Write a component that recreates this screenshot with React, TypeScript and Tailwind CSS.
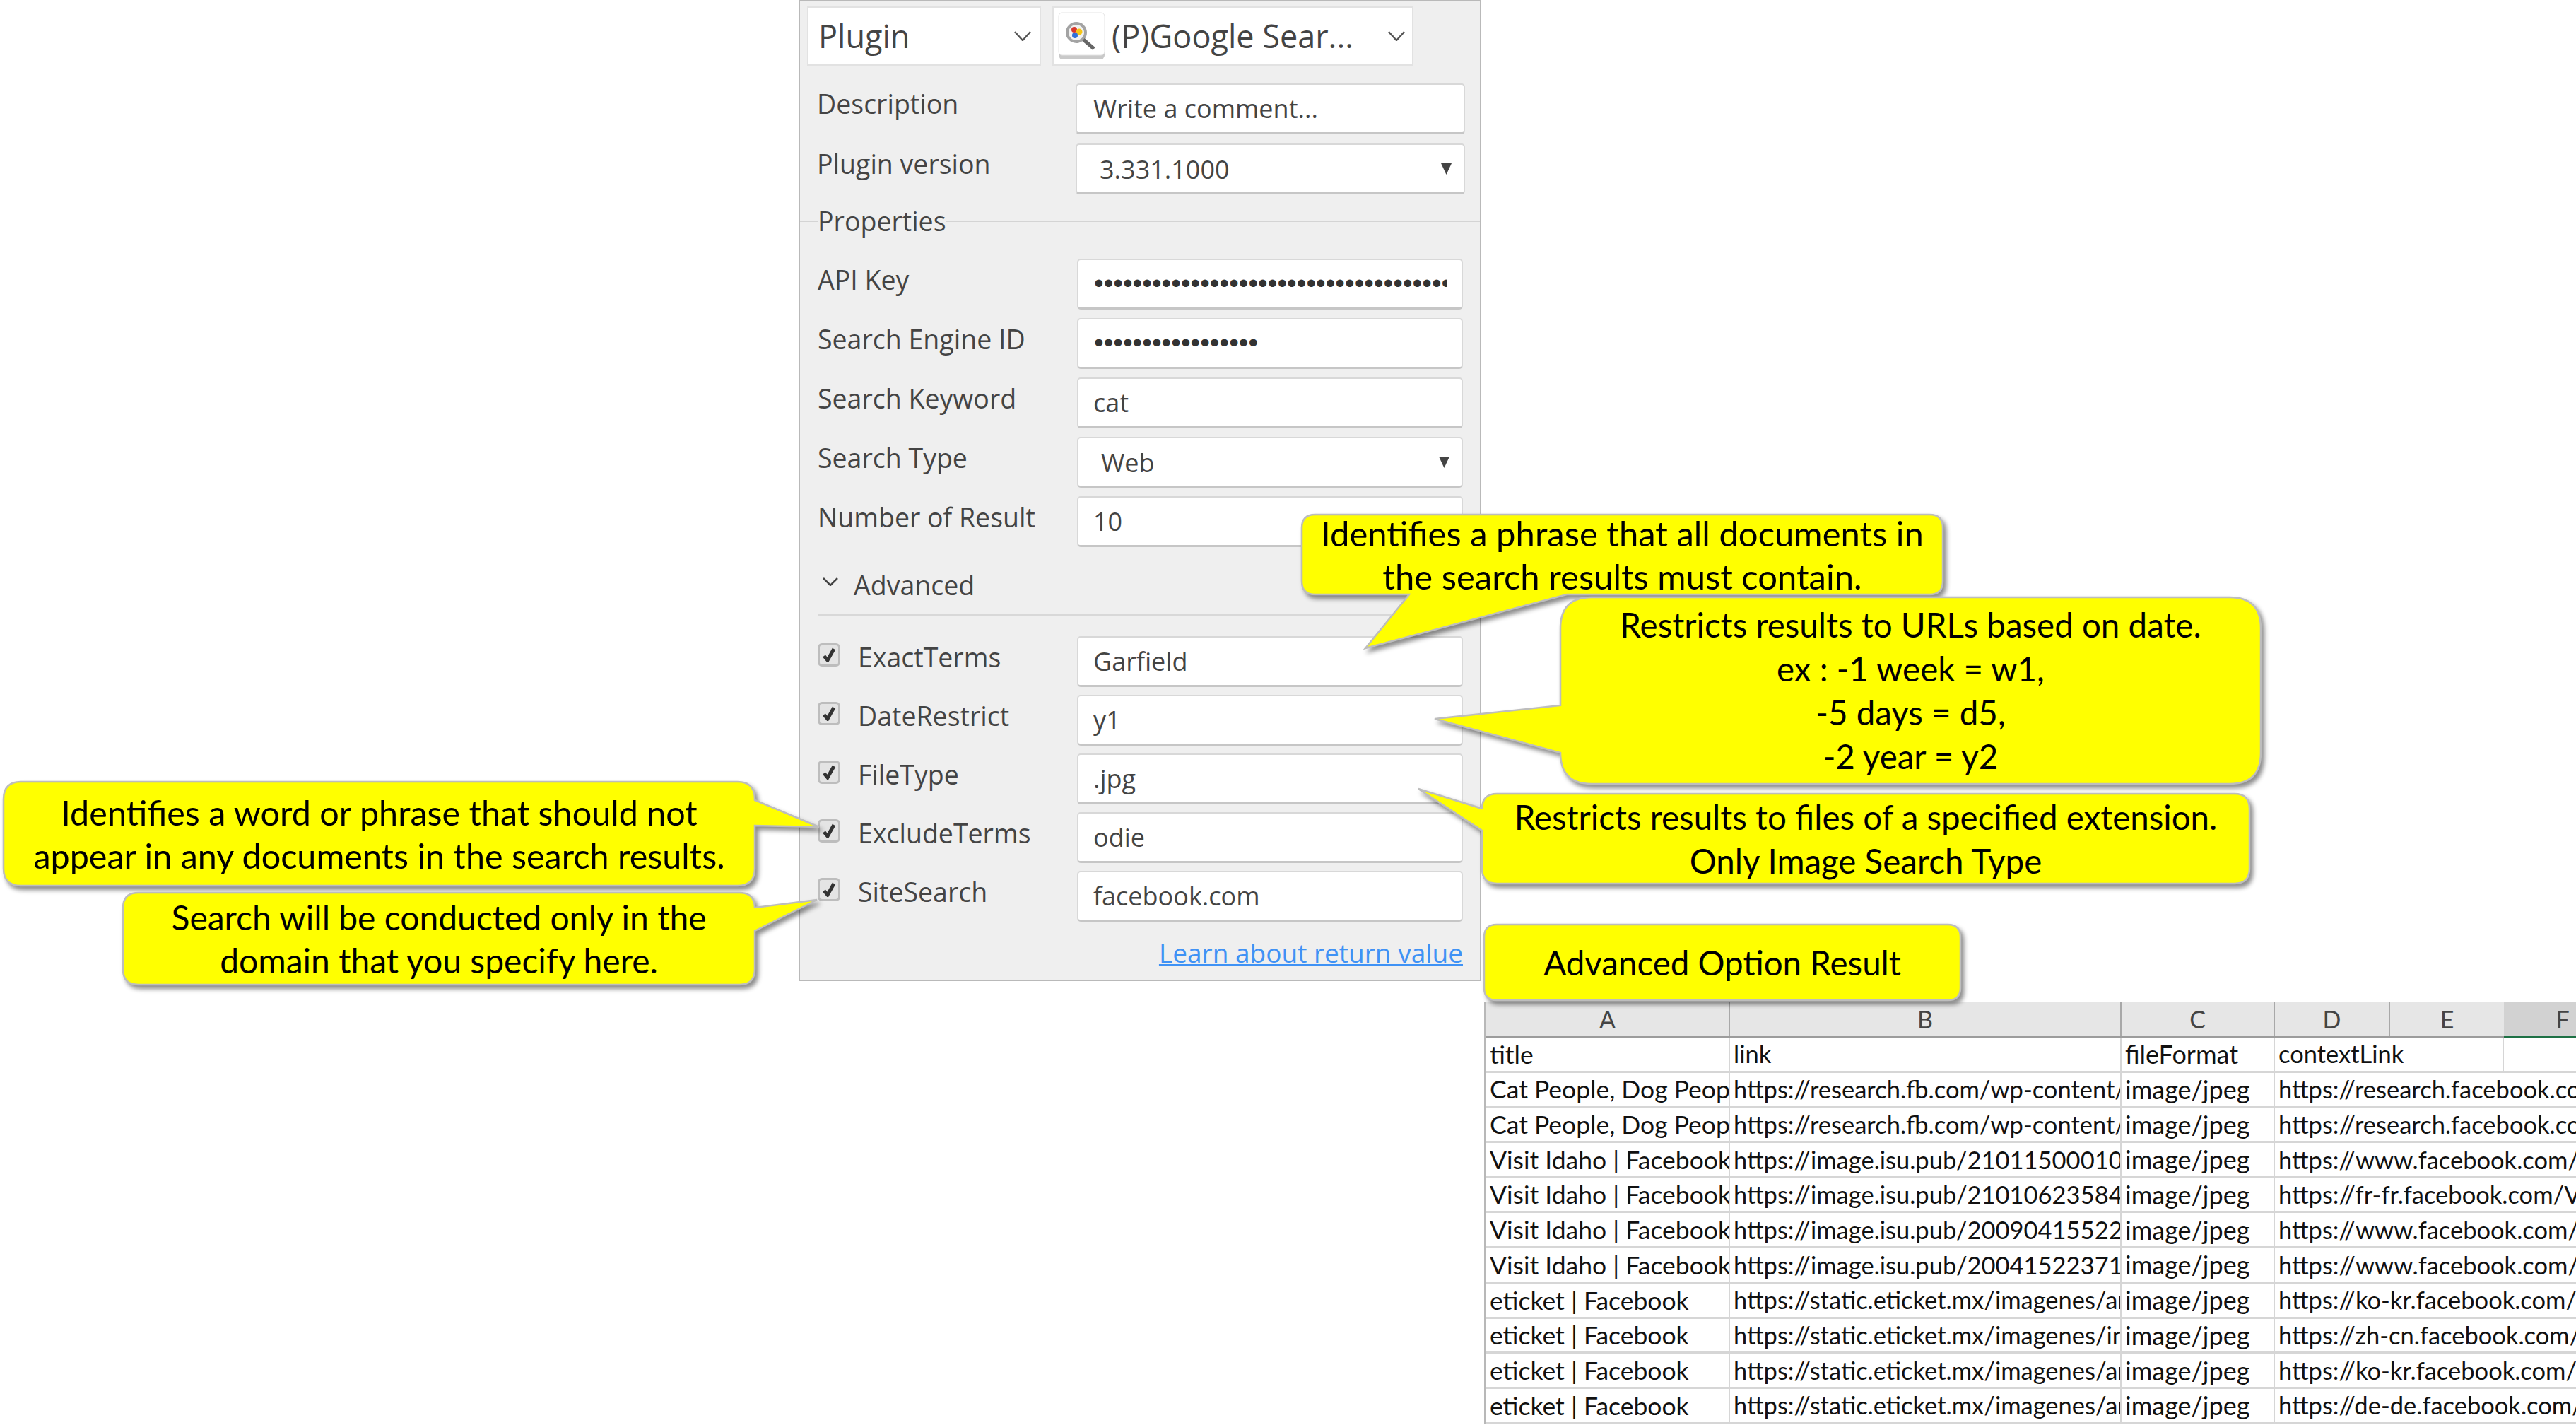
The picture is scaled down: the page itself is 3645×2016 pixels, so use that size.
const SHEET_ROWS = [
  ["Cat People, Dog Peop", "https://research.fb.com/wp-content/", "https://research.facebook.co"],
  ["Cat People, Dog Peop", "https://research.fb.com/wp-content/", "https://research.facebook.co"],
  ["Visit Idaho | Facebook", "https://image.isu.pub/210115000109", "https://www.facebook.com/"],
  ["Visit Idaho | Facebook", "https://image.isu.pub/210106235847", "https://fr-fr.facebook.com/V"],
  ["Visit Idaho | Facebook", "https://image.isu.pub/200904155223", "https://www.facebook.com/"],
  ["Visit Idaho | Facebook", "https://image.isu.pub/200415223714", "https://www.facebook.com/"],
  ["eticket | Facebook", "https://static.eticket.mx/imagenes/ar", "https://ko-kr.facebook.com/"],
  ["eticket | Facebook", "https://static.eticket.mx/imagenes/in", "https://zh-cn.facebook.com/"],
  ["eticket | Facebook", "https://static.eticket.mx/imagenes/ar", "https://ko-kr.facebook.com/"],
  ["eticket | Facebook", "https://static.eticket.mx/imagenes/ar", "https://de-de.facebook.com/"],
];

type Point = [number, number];

type CalloutData = {
  box: string;
  w: number;
  h: number;
  side?: "left" | "right" | "bottom";
  tail?: Point[];
  lines: string[];
  text: string;
};

const CALLOUTS: CalloutData[] = [
  {
    box: "left-[1842px] top-[728px] w-[907px] h-[113px]",
    w: 907,
    h: 113,
    side: "bottom",
    tail: [[375, 113], [90, 189], [152, 113]],
    lines: ["Identifies a phrase that all documents in", "the search results must contain."],
    text: "text-[49px] leading-[61px]",
  },
  {
    box: "left-[2208px] top-[845px] w-[991px] h-[264px]",
    w: 991,
    h: 264,
    side: "left",
    tail: [[0, 220], [-178, 172], [0, 153]],
    lines: ["Restricts results to URLs based on date.", "ex : -1 week = w1,", "-5 days = d5,", "-2 year = y2"],
    text: "text-[47.5px] leading-[62px]",
  },
  {
    box: "left-[2097px] top-[1123px] w-[1086px] h-[127px]",
    w: 1086,
    h: 127,
    side: "left",
    tail: [[0, 52], [-90, -7], [0, 21]],
    lines: ["Restricts results to files of a specified extension.", "Only Image Search Type"],
    text: "text-[47.5px] leading-[62px]",
  },
  {
    box: "left-[2100px] top-[1308px] w-[674px] h-[107px]",
    w: 674,
    h: 107,
    lines: ["Advanced Option Result"],
    text: "text-[47.5px] leading-[62px]",
  },
  {
    box: "left-[5px] top-[1106px] w-[1063px] h-[147px]",
    w: 1063,
    h: 147,
    side: "right",
    tail: [[1063, 26], [1154, 64], [1063, 62]],
    lines: ["Identifies a word or phrase that should not", "appear in any documents in the search results."],
    text: "text-[48.5px] leading-[61px]",
  },
  {
    box: "left-[174px] top-[1263px] w-[894px] h-[130px]",
    w: 894,
    h: 130,
    side: "right",
    tail: [[894, 21], [982, 10], [894, 54]],
    lines: ["Search will be conducted only in the", "domain that you specify here."],
    text: "text-[48px] leading-[61px]",
  },
];

function calloutPath({ w, h, side, tail }: CalloutData) {
  const r = Math.min(w, h) / 6;
  const pts = (s: string) =>
    side === s && tail ? tail.map(([x, y]) => `L${x} ${y}`).join(" ") : "";
  return [
    `M${r} 0`,
    `L${w - r} 0`,
    `Q${w} 0 ${w} ${r}`,
    pts("right"),
    `L${w} ${h - r}`,
    `Q${w} ${h} ${w - r} ${h}`,
    pts("bottom"),
    `L${r} ${h}`,
    `Q0 ${h} 0 ${h - r}`,
    pts("left"),
    `L0 ${r}`,
    `Q0 0 ${r} 0`,
    "Z",
  ].join(" ");
}

function Callout({ data }: { data: CalloutData }) {
  return (
    <div className={`absolute ${data.box}`}>
      <svg className="absolute inset-0 h-full w-full overflow-visible drop-shadow-[4px_5px_3px_rgba(0,0,0,0.45)]">
        <path d={calloutPath(data)} fill="#ffff00" stroke="#bdbdbd" strokeWidth="2.5" />
      </svg>
      <div
        className={`relative flex h-full flex-col items-center justify-center whitespace-nowrap font-['Lato',sans-serif] text-black ${data.text}`}
      >
        {data.lines.map((line) => (
          <div key={line}>{line}</div>
        ))}
      </div>
    </div>
  );
}

function Chevron({ className }: { className: string }) {
  return (
    <svg className={className} viewBox="0 0 24 14" fill="none">
      <path d="M1 1 L12 13 L23 1" stroke="#555555" strokeWidth="2.5" />
    </svg>
  );
}

function Caret() {
  return (
    <svg className="h-[16px] w-[15px]" viewBox="0 0 15 16">
      <path d="M0 0 H15 L7.5 16 Z" fill="#444444" />
    </svg>
  );
}

function Input({
  wide,
  children,
  className = "",
}: {
  wide?: boolean;
  children?: React.ReactNode;
  className?: string;
}) {
  return (
    <div
      className={`flex h-[72px] items-center overflow-hidden rounded-[5px] border-[2px] border-[#d8d8d8] border-b-[3px] border-b-[#c6c6c6] bg-white text-[36px] text-[#444444] ${
        wide ? "w-[551px]" : "w-[546px]"
      } ${className}`}
    >
      {children}
    </div>
  );
}

function Field({ label, children }: { label: string; children: React.ReactNode }) {
  return (
    <div className="flex items-center justify-between pl-[25px] pr-[24px]">
      <span className="mb-[12px] text-[37.5px] text-[#444444]">{label}</span>
      {children}
    </div>
  );
}

function CheckField({ label, value }: { label: string; value: string }) {
  return (
    <div className="flex items-center justify-between pl-[25px] pr-[24px]">
      <div className="flex items-center gap-[25px]">
        <span className="mb-[20px] flex h-[33px] w-[32px] items-center justify-center rounded-[6px] border-[3px] border-[#bdbdbd] bg-[#e4e4e4]">
          <svg className="h-[22px] w-[20px]" viewBox="0 0 20 22" fill="none">
            <path d="M3 13 L8 19 L17 3" stroke="#333333" strokeWidth="5" />
          </svg>
        </span>
        <span className="mb-[12px] text-[37.5px] text-[#444444]">{label}</span>
      </div>
      <Input>
        <span className="pl-[21px]">{value}</span>
      </Input>
    </div>
  );
}

function Cell({ className = "", children }: { className?: string; children?: React.ReactNode }) {
  return (
    <div className={`flex shrink-0 items-center overflow-hidden whitespace-nowrap pl-[5px] ${className}`}>
      {children}
    </div>
  );
}

function Sheet() {
  return (
    <div className="ml-[2100px] mt-[30px] flex w-[1545px] flex-col border-l-[3px] border-[#b8b8b8] font-['Lato',sans-serif] text-[#111111]">
      <div className="flex h-[50px] border-b-[3px] border-[#9c9c9c] bg-[#e6e6e6] text-[34px] text-[#444444]">
        <div className="flex w-[345px] shrink-0 items-center justify-center border-r-[2px] border-[#a8a8a8]">A</div>
        <div className="flex w-[554px] shrink-0 items-center justify-center border-r-[2px] border-[#a8a8a8]">B</div>
        <div className="flex w-[217px] shrink-0 items-center justify-center border-r-[2px] border-[#a8a8a8]">C</div>
        <div className="flex w-[163px] shrink-0 items-center justify-center border-r-[2px] border-[#a8a8a8]">D</div>
        <div className="flex w-[161px] shrink-0 items-center justify-center">E</div>
        <div className="-mb-[3px] flex w-[166px] shrink-0 items-center justify-center border-b-[3px] border-[#1e7145] bg-[#d2d2d2]">F</div>
      </div>
      <div className="flex h-[49.7px] border-b-[3px] border-[#d6d6d6]">
        <Cell className="w-[345px] border-r-[2px] border-[#d6d6d6] text-[35.5px]">title</Cell>
        <Cell className="w-[554px] border-r-[2px] border-[#d6d6d6] text-[34.5px]">link</Cell>
        <Cell className="w-[217px] border-r-[2px] border-[#d6d6d6] text-[36px]">fileFormat</Cell>
        <Cell className="w-[324px] border-r-[2px] border-[#d6d6d6] text-[34.5px]">contextLink</Cell>
      </div>
      {SHEET_ROWS.map(([title, link, context], i) => (
        <div key={i} className="flex h-[49.7px] border-b-[3px] border-[#d6d6d6]">
          <Cell className="w-[345px] border-r-[2px] border-[#d6d6d6] text-[35.5px]">{title}</Cell>
          <Cell className="w-[554px] border-r-[2px] border-[#d6d6d6] text-[34.5px]">{link}</Cell>
          <Cell className="w-[217px] border-r-[2px] border-[#d6d6d6] text-[36px]">image/jpeg</Cell>
          <Cell className="flex-1 text-[34.5px]">{context}</Cell>
        </div>
      ))}
    </div>
  );
}

export default function App() {
  return (
    <div className="relative h-[2016px] w-[3645px] overflow-hidden bg-white">
      <div className="ml-[1130px] flex h-[1388px] w-[966px] flex-col border-[2px] border-[#b9b9b9] bg-[#efefef] font-['Open_Sans',sans-serif]">
        <div className="ml-[10px] mt-[7px] flex gap-[16px] text-[45px] text-[#444444]">
          <div className="flex h-[84px] w-[331px] items-center justify-between border-[2px] border-[#e2e2e2] bg-white pl-[14px] pr-[12px]">
            <span>Plugin</span>
            <Chevron className="h-[14px] w-[24px]" />
          </div>
          <div className="flex h-[84px] w-[511px] items-center border-[2px] border-[#e2e2e2] bg-white pl-[6px] pr-[10px]">
            <svg className="h-[68px] w-[67px] shrink-0" viewBox="0 0 67 68">
              <rect x="1" y="1" width="65" height="66" rx="6" fill="#c9c9c9" />
              <rect x="1" y="1" width="65" height="60" rx="5" fill="#ffffff" stroke="#e4e4e4" />
              <circle cx="26" cy="29" r="13" fill="#f0f0f0" stroke="#a3a3a3" strokeWidth="4" />
              <circle cx="23" cy="25" r="4" fill="#d8382c" />
              <circle cx="30" cy="28" r="4.5" fill="#f6c515" />
              <circle cx="24" cy="33" r="4" fill="#2f6fd8" />
              <path d="M36 39 L51 52" stroke="#666666" strokeWidth="5" />
            </svg>
            <span className="ml-[9px] flex-1 whitespace-nowrap">(P)Google Sear...</span>
            <Chevron className="h-[14px] w-[24px]" />
          </div>
        </div>

        <div className="mt-[25px] flex flex-col gap-[13px]">
          <div className="flex items-center justify-between pl-[24px] pr-[21px]">
            <span className="mb-[14px] text-[37.5px] text-[#444444]">Description</span>
            <Input wide className="text-[#6b6b6b]">
              <span className="pl-[23px]">Write a comment...</span>
            </Input>
          </div>
          <div className="flex items-center justify-between pl-[24px] pr-[21px]">
            <span className="mb-[14px] text-[37.5px] text-[#444444]">Plugin version</span>
            <Input wide>
              <span className="mt-[2px] flex-1 pl-[32px]">3.331.1000</span>
              <span className="mr-[17px]">
                <Caret />
              </span>
            </Input>
          </div>
        </div>

        <div className="mt-[16px] flex h-[44px] items-center text-[37.5px] text-[#444444]">
          <div className="h-[2px] w-[25px] bg-[#d4d4d4]" />
          <span>Properties</span>
          <div className="h-[2px] flex-1 bg-[#d4d4d4]" />
        </div>

        <div className="mt-[31px] flex flex-col gap-[12px]">
          <Field label="API Key">
            <Input>
              <span className="ml-[22px] mr-[21px] overflow-hidden whitespace-nowrap font-['Liberation_Sans',sans-serif] text-[39px] text-[#333333]">
                {"•".repeat(37)}
              </span>
            </Input>
          </Field>
          <Field label="Search Engine ID">
            <Input>
              <span className="whitespace-nowrap pl-[22px] font-['Liberation_Sans',sans-serif] text-[39px] text-[#333333]">
                {"•".repeat(17)}
              </span>
            </Input>
          </Field>
          <Field label="Search Keyword">
            <Input>
              <span className="pl-[21px]">cat</span>
            </Input>
          </Field>
          <Field label="Search Type">
            <Input>
              <span className="mt-[2px] flex-1 pl-[32px]">Web</span>
              <span className="mr-[17px]">
                <Caret />
              </span>
            </Input>
          </Field>
          <Field label="Number of Result">
            <Input>
              <span className="pl-[21px]">10</span>
            </Input>
          </Field>
        </div>

        <div className="ml-[32px] mt-[29px] flex h-[50px] items-center gap-[22px] text-[37.5px] text-[#444444]">
          <svg className="mb-[10px] h-[12px] w-[22px]" viewBox="0 0 22 12" fill="none">
            <path d="M1 1 L11 11 L21 1" stroke="#444444" strokeWidth="2.5" />
          </svg>
          <span>Advanced</span>
        </div>
        <div className="ml-[25px] mr-[25px] mt-[16px] h-[3px] bg-[#d8d8d8]" />

        <div className="mt-[28px] flex flex-col gap-[11px]">
          <CheckField label="ExactTerms" value="Garfield" />
          <CheckField label="DateRestrict" value="y1" />
          <CheckField label="FileType" value=".jpg" />
          <CheckField label="ExcludeTerms" value="odie" />
          <CheckField label="SiteSearch" value="facebook.com" />
        </div>

        <div className="mr-[24px] mt-[16px] text-right text-[37px] text-[#3f92f5] underline">
          Learn about return value
        </div>
      </div>

      <Sheet />

      {CALLOUTS.map((c) => (
        <Callout key={c.box} data={c} />
      ))}
    </div>
  );
}
